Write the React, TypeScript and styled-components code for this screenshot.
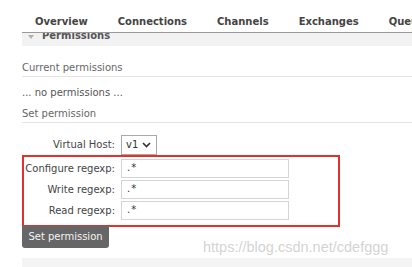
import React from "react";
import styled, { createGlobalStyle } from "styled-components";

const GlobalStyle = createGlobalStyle`
    html, body {
        margin: 0;
        padding: 0;
        background: #fff;
        font-family: "DejaVu Sans", Verdana, sans-serif;
        color: #484848;
    }
`;

const Page = styled.div`
    position: relative;
    width: 412px;
    height: 267px;
    overflow: hidden;
`;

const Nav = styled.div`
    display: flex;
    gap: 30px;
    margin-left: 22px;
    padding: 16px 0 0 13px;
    height: 16px;
    border-bottom: 1px solid #9a9a9a;
    white-space: nowrap;
`;

const NavItem = styled.span`
    font-size: 10px;
    font-weight: bold;
    color: #444;
`;

const Content = styled.div`
    margin-left: 22px;
`;

const SectionHeader = styled.div`
    display: flex;
    align-items: flex-start;
    gap: 8px;
    height: 13px;
    padding-left: 6px;
    background: #f2f2f2;
    overflow: hidden;
`;

const Triangle = styled.span`
    margin-top: 2px;
    width: 0;
    height: 0;
    border-left: 3px solid transparent;
    border-right: 3px solid transparent;
    border-top: 4px solid #b0b0b0;
`;

const HeaderText = styled.span`
    margin-top: -3px;
    font-size: 10px;
    font-weight: bold;
    color: #555;
`;

const SubTitle = styled.div<{ $top: number }>`
    margin-top: ${(p) => p.$top}px;
    padding-bottom: 3px;
    font-size: 10px;
    color: #666;
    border-bottom: 1px solid #e4e4e4;
`;

const Note = styled.div`
    margin-top: 10px;
    font-size: 10px;
    color: #555;
`;

const Row = styled.div`
    display: flex;
    align-items: center;
    gap: 6px;
    height: 21px;
`;

const Label = styled.span<{ $width: number }>`
    width: ${(p) => p.$width}px;
    text-align: right;
    font-size: 10px;
    color: #444;
`;

const Select = styled.div`
    display: flex;
    align-items: center;
    gap: 4px;
    box-sizing: border-box;
    width: 36px;
    height: 20px;
    padding-left: 4px;
    border: 1px solid #aaa;
    font-size: 10px;
    color: #333;
`;

const Highlight = styled.div`
    box-sizing: border-box;
    width: 318px;
    height: 72px;
    padding: 1px 0 0 1px;
    border: 2px solid #e0312c;
`;

const Input = styled.div`
    box-sizing: border-box;
    width: 168px;
    height: 19px;
    padding-left: 5px;
    border: 1px solid #d4d4d4;
    font-size: 10px;
    line-height: 16px;
    letter-spacing: 1px;
    color: #333;
`;

const Button = styled.div`
    width: 87px;
    height: 22px;
    margin-top: -1px;
    border-radius: 0 0 3px 3px;
    background: #666;
    color: #f4f4f4;
    font-size: 10px;
    line-height: 21px;
    text-align: center;
`;

const NextSection = styled.div`
    margin-top: 10px;
    height: 20px;
    background: #f4f4f4;
`;

const Watermark = styled.span`
    position: absolute;
    left: 203px;
    top: 239px;
    font-family: "Liberation Sans", Arial, sans-serif;
    font-size: 14.5px;
    color: rgba(200, 200, 200, 0.8);
`;

const Chevron = () => (
    <svg width="9" height="6" viewBox="0 0 9 6">
        <path d="M1 1l3.5 3.5L8 1" stroke="#333" strokeWidth="1.6" fill="none" />
    </svg>
);

const regexRows = ["Configure regexp:", "Write regexp:", "Read regexp:"];

const App = () => (
    <Page>
        <GlobalStyle />
        <Nav>
            {["Overview", "Connections", "Channels", "Exchanges", "Queues"].map((item) => (
                <NavItem key={item}>{item}</NavItem>
            ))}
        </Nav>
        <Content>
            <SectionHeader>
                <Triangle />
                <HeaderText>Permissions</HeaderText>
            </SectionHeader>
            <SubTitle $top={16}>Current permissions</SubTitle>
            <Note>... no permissions ...</Note>
            <SubTitle $top={10}>Set permission</SubTitle>
            <Row style={{ marginTop: 11 }}>
                <Label $width={93}>Virtual Host:</Label>
                <Select>
                    v1 <Chevron />
                </Select>
            </Row>
            <Highlight>
                {regexRows.map((label) => (
                    <Row key={label}>
                        <Label $width={90}>{label}</Label>
                        <Input>.*</Input>
                    </Row>
                ))}
            </Highlight>
            <Button>Set permission</Button>
            <NextSection />
        </Content>
        <Watermark>https://blog.csdn.net/cdefggg</Watermark>
    </Page>
);

export default App;
